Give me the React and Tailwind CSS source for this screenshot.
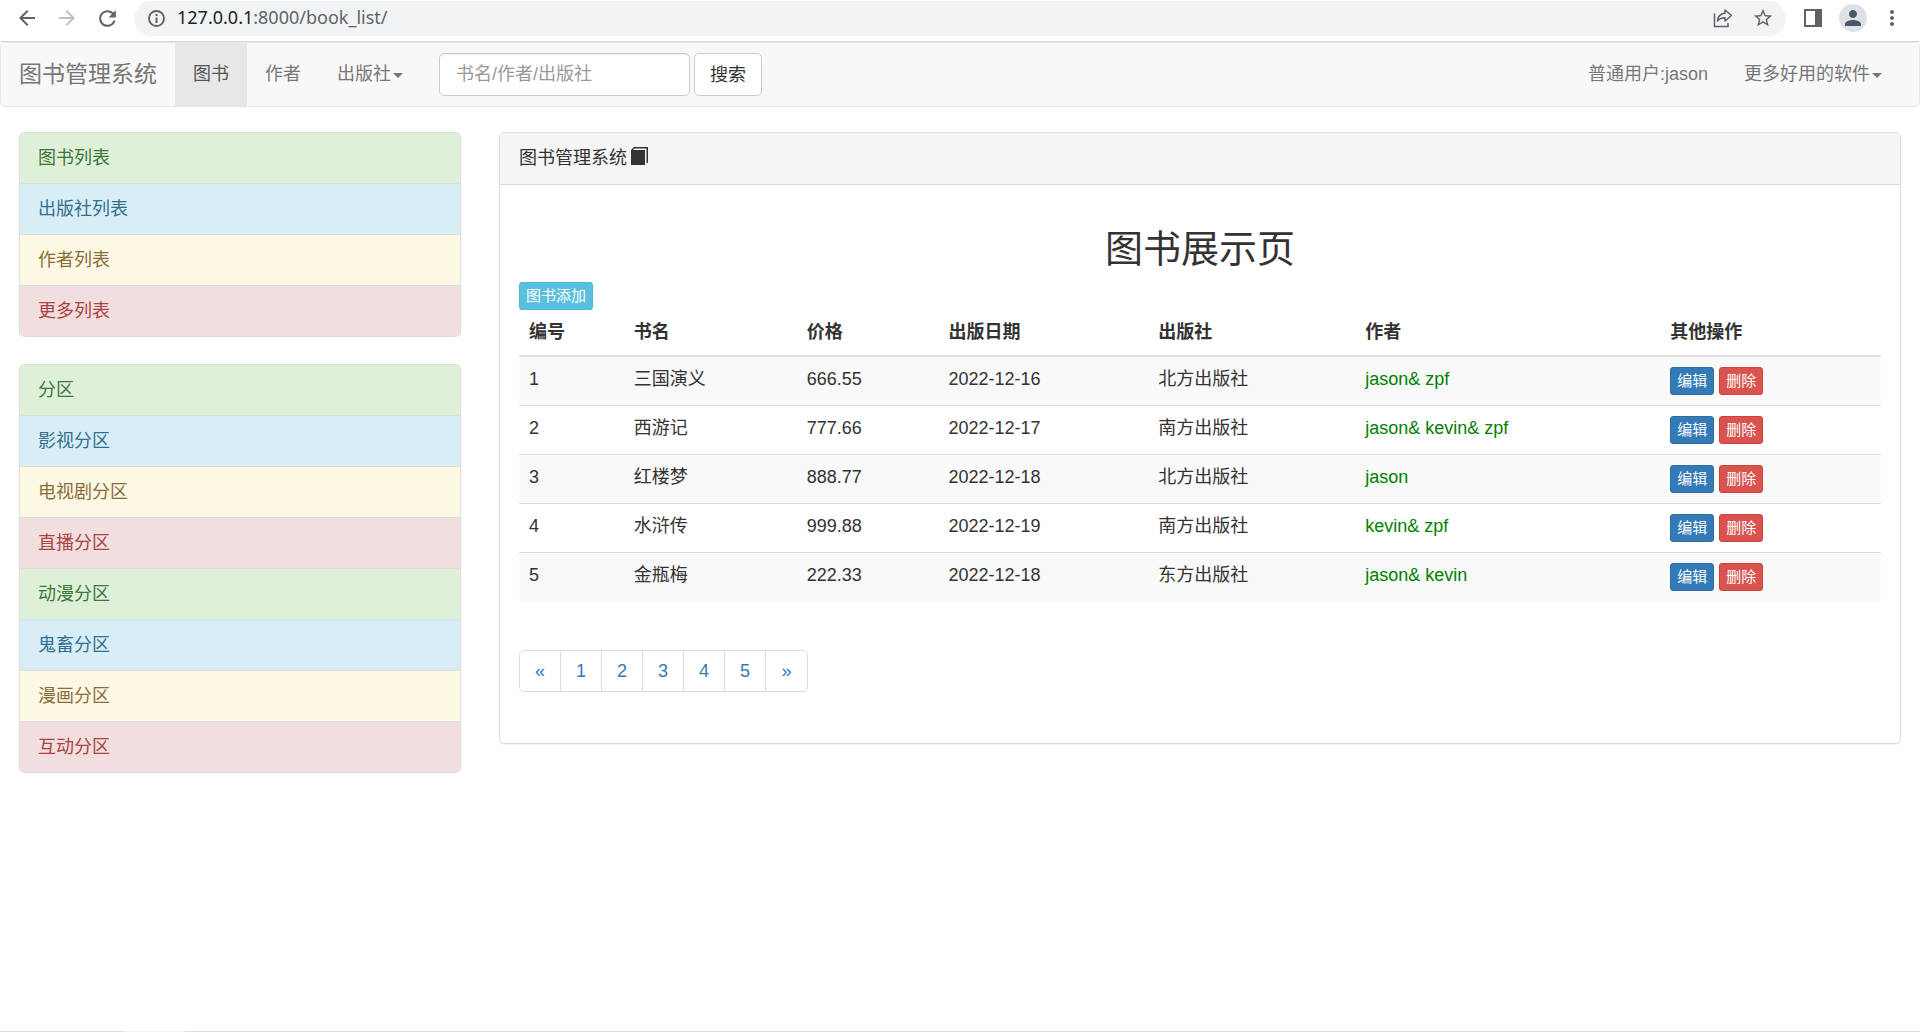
import {
  MdArrowBack,
  MdArrowForward,
  MdMoreVert,
  MdPerson,
  MdRefresh,
  MdStarBorder,
} from "react-icons/md";

const TABLE_HEAD = [
  { label: "编号", width: "w-[7.7%]" },
  { label: "书名", width: "w-[12.7%]" },
  { label: "价格", width: "w-[10.4%]" },
  { label: "出版日期", width: "w-[15.4%]" },
  { label: "出版社", width: "w-[15.2%]" },
  { label: "作者", width: "w-[22.4%]" },
  { label: "其他操作", width: "w-[16.2%]" },
];

const BOOKS = [
  { id: 1, title: "三国演义", price: "666.55", date: "2022-12-16", publish: "北方出版社", authors: ["jason", "zpf"] },
  { id: 2, title: "西游记", price: "777.66", date: "2022-12-17", publish: "南方出版社", authors: ["jason", "kevin", "zpf"] },
  { id: 3, title: "红楼梦", price: "888.77", date: "2022-12-18", publish: "北方出版社", authors: ["jason"] },
  { id: 4, title: "水浒传", price: "999.88", date: "2022-12-19", publish: "南方出版社", authors: ["kevin", "zpf"] },
  { id: 5, title: "金瓶梅", price: "222.33", date: "2022-12-18", publish: "东方出版社", authors: ["jason", "kevin"] },
];

const MAIN_LIST = ["图书列表", "出版社列表", "作者列表", "更多列表"];

const ZONE_LIST = [
  "分区",
  "影视分区",
  "电视剧分区",
  "直播分区",
  "动漫分区",
  "鬼畜分区",
  "漫画分区",
  "互动分区",
];

const PAGES = ["«", "1", "2", "3", "4", "5", "»"];

// success, info, warning, danger
const ITEM_COLORS = [
  "bg-[#dff0d8] text-[#3c763d]",
  "bg-[#d9edf7] text-[#31708f]",
  "bg-[#fcf8e3] text-[#8a6d3b]",
  "bg-[#f2dede] text-[#a94442]",
];

const Caret = () => (
  <span className="ml-0.5 inline-block border-x-5 border-t-5 border-x-transparent border-t-current align-middle" />
);

const InfoIcon = () => (
  <svg width="17" height="17" viewBox="0 0 17 17">
    <circle cx="8.5" cy="8.5" r="7.5" fill="none" stroke="currentColor" strokeWidth="1.9" />
    <path fill="currentColor" d="M7.500 4h2v2h-2zM7.500 7.500h2V13h-2z" />
  </svg>
);

const ShareIcon = () => (
  <svg width="20" height="20" viewBox="0 0 20 20" fill="none" stroke="currentColor" strokeWidth="1.5">
    <path d="M1.5 5.5v13h13.500v-3.500" />
    <path d="M12 2l6.500 5.500L12 13v-3.200c-3.500-.1-5.800.9-7.500 3.200.3-4.600 3-7.300 7.500-7.800z" strokeLinejoin="round" />
  </svg>
);

const SidePanelIcon = () => (
  <svg width="18" height="18" viewBox="0 0 18 18">
    <path fill="currentColor" fillRule="evenodd" d="M0 0h18v18H0zM2 2v14h9V2z" />
  </svg>
);

const BookIcon = () => (
  <svg className="ml-1 inline-block align-[-1px]" width="17" height="18" viewBox="0 0 17 18">
    <path fill="#333" d="M0 3L3 0h14v15.500L15.500 16.500V1.500H3.500L2 3h12v15H0z" />
  </svg>
);

const BrowserBar = () => (
  <div className="flex h-[42px] items-center border-b border-[#d5d7da] pr-5 pb-[5px] pl-[15px] text-[#5f6368]">
    <div className="flex items-center gap-4">
      <button type="button" aria-label="Back">
        <MdArrowBack size={24} />
      </button>
      <button type="button" aria-label="Forward" className="text-[#bdc1c6]">
        <MdArrowForward size={24} />
      </button>
      <button type="button" aria-label="Reload">
        <MdRefresh size={25} />
      </button>
    </div>
    <div className="mr-[18px] ml-3.5 flex h-[35px] flex-1 items-center rounded-full bg-[#f1f3f4] pr-3 pl-3.5">
      <InfoIcon />
      <div className="ml-3 flex-1 pb-0.5 font-['Noto_Sans',sans-serif] text-lg leading-6">
        <span className="text-[#202124]">127.0.0.1</span>:8000/book_list/
      </div>
      <button type="button" aria-label="Share" className="mr-[19px]">
        <ShareIcon />
      </button>
      <button type="button" aria-label="Bookmark">
        <MdStarBorder size={22} />
      </button>
    </div>
    <div className="flex items-center">
      <button type="button" aria-label="Side panel">
        <SidePanelIcon />
      </button>
      <button
        type="button"
        aria-label="Profile"
        className="mx-[17px] flex size-7 items-center justify-center rounded-full bg-[#dee1e6] text-[#4a5568]"
      >
        <MdPerson size={24} />
      </button>
      <button type="button" aria-label="Menu" className="-mx-1">
        <MdMoreVert size={24} />
      </button>
    </div>
  </div>
);

const Navbar = () => (
  <nav className="flex h-[65px] items-stretch rounded-[5px] border border-[#e7e7e7] bg-[#f8f8f8] pr-[19px] leading-[63px] text-[#777]">
    <a href="#" className="px-[18px] text-[23px]">
      图书管理系统
    </a>
    <a href="#" className="bg-[#e7e7e7] px-[18px] text-[#555]">
      图书
    </a>
    <a href="#" className="px-[18px]">
      作者
    </a>
    <a href="#" className="px-[18px]">
      出版社
      <Caret />
    </a>
    <form className="ml-[18px] flex items-center gap-1" onSubmit={(e) => e.preventDefault()}>
      <input
        type="text"
        aria-label="书名/作者/出版社"
        placeholder="书名/作者/出版社"
        className="h-[43px] w-[251px] rounded-[5px] border border-[#ccc] bg-white px-4 leading-6 text-[#555] shadow-[inset_0_1px_1px_rgba(0,0,0,0.075)] placeholder:text-[#999]"
      />
      <button
        type="submit"
        className="h-[43px] rounded-[5px] border border-[#ccc] bg-white px-[15px] leading-6 text-[#333]"
      >
        搜索
      </button>
    </form>
    <div className="ml-auto flex">
      <a href="#" className="px-[18px]">
        普通用户:jason
      </a>
      <a href="#" className="px-[18px]">
        更多好用的软件
        <Caret />
      </a>
    </div>
  </nav>
);

const ListGroup = ({ items }) => (
  <div className="overflow-hidden rounded-[5px] border border-b-0 border-[#ddd]">
    {items.map((item, index) => (
      <a
        key={item}
        href="#"
        className={`block border-b border-[#ddd] px-[18px] py-3 last:rounded-b-[5px] ${ITEM_COLORS[index % 4]}`}
      >
        {item}
      </a>
    ))}
  </div>
);

const BookTable = () => (
  <table className="w-full table-fixed text-left">
    <thead>
      <tr className="border-b-2 border-[#ddd]">
        {TABLE_HEAD.map((head) => (
          <th key={head.label} className={`px-2.5 pt-[9px] pb-2.5 font-bold ${head.width}`}>
            {head.label}
          </th>
        ))}
      </tr>
    </thead>
    <tbody>
      {BOOKS.map((book) => (
        <tr key={book.id} className="border-t border-[#ddd] align-top odd:bg-[#f9f9f9]">
          <td className="px-2.5 pt-[9px]">{book.id}</td>
          <td className="px-2.5 pt-[9px]">{book.title}</td>
          <td className="px-2.5 pt-[9px]">{book.price}</td>
          <td className="px-2.5 pt-[9px]">{book.date}</td>
          <td className="px-2.5 pt-[9px]">{book.publish}</td>
          <td className="px-2.5 pt-[9px] text-[green]">{book.authors.join("& ")}</td>
          <td className="p-2.5">
            <div className="flex gap-[5px] text-[15px] leading-[26px] text-white">
              <a href="#" className="rounded-[3px] border border-[#2e6da4] bg-[#337ab7] px-1.5">
                编辑
              </a>
              <button type="button" className="rounded-[3px] border border-[#d43f3a] bg-[#d9534f] px-1.5">
                删除
              </button>
            </div>
          </td>
        </tr>
      ))}
    </tbody>
  </table>
);

const Pagination = () => (
  <ul className="inline-flex overflow-hidden rounded-[5px] border border-[#ddd] text-center leading-10 text-[#337ab7]">
    {PAGES.map((page) => (
      <li key={page} className="w-[41px] border-r border-[#ddd] last:border-r-0">
        <a href="#" className="block">
          {page}
        </a>
      </li>
    ))}
  </ul>
);

const App = () => {
  return (
    <div className="flex min-h-screen flex-col bg-white font-['Liberation_Sans','Noto_Sans_CJK_SC',sans-serif] text-lg leading-[26px] text-[#333]">
      <BrowserBar />
      <Navbar />
      <div className="mt-[25px] flex flex-1 items-start">
        <aside className="flex w-1/4 flex-col gap-[27px] px-[19px]">
          <ListGroup items={MAIN_LIST} />
          <ListGroup items={ZONE_LIST} />
        </aside>
        <main className="w-3/4 px-[19px]">
          <div className="rounded-[5px] border border-[#ddd] shadow-[0_1px_1px_rgba(0,0,0,0.05)]">
            <div className="rounded-t-[5px] border-b border-[#ddd] bg-[#f5f5f5] px-[19px] pt-3 pb-[13px]">
              图书管理系统
              <BookIcon />
            </div>
            <div className="px-[19px] pt-11 pb-[51px]">
              <h2 className="mb-3 text-center text-[38px] leading-[41px]">图书展示页</h2>
              <div className="flex">
                <a
                  href="#"
                  className="rounded-[3px] border border-[#46b8da] bg-[#5bc0de] px-1.5 text-[15px] leading-[26px] text-white"
                >
                  图书添加
                </a>
              </div>
              <BookTable />
              <div className="mt-[49px] flex">
                <Pagination />
              </div>
            </div>
          </div>
        </main>
      </div>
      <div className="flex h-px">
        <div className="w-[124px] bg-[#e0e0e0]" />
        <div className="w-[61px] bg-[#f3f3f3]" />
        <div className="flex-1 bg-[#e0e0e0]" />
      </div>
    </div>
  );
};

export default App;
